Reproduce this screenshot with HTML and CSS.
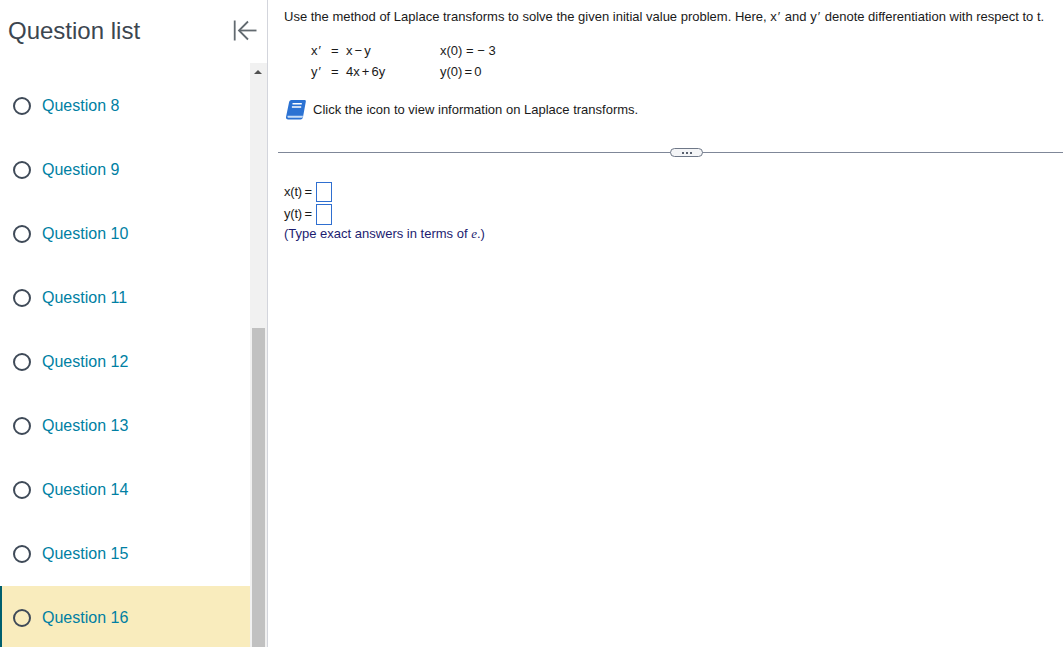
FILE: index.html
```html
<!DOCTYPE html>
<html lang="en">
<head>
<meta charset="utf-8">
<title>Question list</title>
<link rel="stylesheet" href="styles.css">
</head>
<body>
<div class="app">
  <aside class="sidebar">
    <header class="side-head">
      <h1 class="side-title">Question list</h1>
      <svg class="collapse" width="24" height="24" viewBox="0 0 24 24" fill="none" stroke="#626a70" stroke-width="1.8"><path d="M1.700 1.500v20"/><path d="M23.500 11.500H6"/><path d="M15 2.500 6 11.500l9 9"/></svg>
    </header>
    <div class="side-body">
      <ul class="qlist">
        <li class="qitem"><span class="radio"></span><span class="qlabel">Question 8</span></li>
        <li class="qitem"><span class="radio"></span><span class="qlabel">Question 9</span></li>
        <li class="qitem"><span class="radio"></span><span class="qlabel">Question 10</span></li>
        <li class="qitem"><span class="radio"></span><span class="qlabel">Question 11</span></li>
        <li class="qitem"><span class="radio"></span><span class="qlabel">Question 12</span></li>
        <li class="qitem"><span class="radio"></span><span class="qlabel">Question 13</span></li>
        <li class="qitem"><span class="radio"></span><span class="qlabel">Question 14</span></li>
        <li class="qitem"><span class="radio"></span><span class="qlabel">Question 15</span></li>
        <li class="qitem current"><span class="radio"></span><span class="qlabel">Question 16</span></li>
      </ul>
      <div class="scrollbar">
        <div class="scroll-up"></div>
        <div class="scroll-thumb"></div>
      </div>
    </div>
  </aside>
  <main class="content">
    <section class="problem">
      <p class="prompt">Use the method of Laplace transforms to solve the given initial value problem. Here, x<span class="prime">′</span> and y<span class="prime">′</span> denote differentiation with respect to t.</p>
      <div class="system">
        <div class="eqs">
          <div class="eq"><span class="lhs">x<span class="prime">′</span></span><span class="eqsign">=</span><span class="tight">x − y</span></div>
          <div class="eq"><span class="lhs">y<span class="prime">′</span></span><span class="eqsign">=</span><span class="tight">4x + 6y</span></div>
        </div>
        <div class="inits">
          <div class="eq">x(0) = − 3</div>
          <div class="eq"><span class="tight">y(0) = 0</span></div>
        </div>
      </div>
      <div class="info">
        <svg class="book" width="20" height="20" viewBox="0 0 20 20"><path d="M5.500 0h13c1 0 1.500.7 1.300 1.700L17 17c-.3 1.500-1 2.500-2.500 2.500H2C.7 19.500-.2 18.500 0 17L3 2.500C3.300 1 4 0 5.500 0z" fill="#2b72d3"/><path d="M1.800 15.800H17l-.5 2H2.300c-1 0-1-2-.5-2z" fill="#c5dcf7"/><path d="M6.500 3.800h9.300M5.900 7h9.300" stroke="#fff" stroke-width="1.400" fill="none"/></svg>
        <span>Click the icon to view information on Laplace transforms.</span>
      </div>
    </section>
    <div class="divider"><span class="divider-pill"><i></i><i></i><i></i></span></div>
    <section class="answers">
      <div class="answer"><span class="answer-label">x(t) =</span><span class="box"></span></div>
      <div class="answer"><span class="answer-label">y(t) =</span><span class="box box-tall"></span></div>
      <p class="hint">(Type exact answers in terms of <em class="e">e</em>.)</p>
    </section>
  </main>
</div>
</body>
</html>
```
FILE: styles.css
```css
* { box-sizing: border-box; }
html, body { margin: 0; height: 100%; overflow: hidden; background: #fff; }
body { font-family: "Liberation Sans", Arial, sans-serif; color: #1a1a1a; }
.app { display: flex; height: 647px; }
.sidebar { width: 268px; flex: none; display: flex; flex-direction: column; border-right: 1px solid #d3d5dc; }
.side-head { height: 63px; flex: none; display: flex; align-items: center; justify-content: space-between; padding: 0 10px 2px 8px; }
.side-title { margin: 0; font-size: 24px; font-weight: 400; color: #3c4650; }
.collapse { display: block; margin-top: 1px; }
.side-body { flex: 1; min-height: 0; display: flex; }
.qlist { flex: 1; list-style: none; margin: 0; padding: 11px 0 0; overflow: hidden; }
.qitem { height: 64px; display: flex; align-items: center; padding-left: 13px; gap: 11px; }
.qitem.current { background: #f9ecbd; border-left: 2px solid #005f6e; padding-left: 11px; height: 63px; }
.radio { width: 18px; height: 18px; border: 2px solid #3f4a58; border-radius: 50%; flex: none; }
.qlabel { font-size: 16px; color: #007fa3; }
.scrollbar { width: 17px; flex: none; background: #f1f1f1; display: flex; flex-direction: column; }
.scroll-up { margin-left: 4px; margin-top: 7px; width: 0; border-left: 4px solid transparent; border-right: 4px solid transparent; border-bottom: 4px solid #505050; height: 0; }
.scroll-thumb { margin: 254px 2px 0; flex: 1; background: #c1c1c1; }
.content { flex: 1; min-width: 0; padding-top: 9px; font-size: 13px; color: #1a1a1a; }
.problem { padding-left: 16px; }
.prompt { margin: 0; line-height: 15px; white-space: nowrap; }
.prime { margin: 0 1px 0 1px; }
.system { display: flex; margin: 16px 0 0 27px; }
.eqs { width: 129px; }
.eq { height: 21px; line-height: 21px; display: flex; white-space: pre; }
.tight { word-spacing: -1.5px; }
.lhs { width: 20px; }
.eqsign { width: 15px; }
.info { display: flex; align-items: center; gap: 7px; margin-top: 17px; height: 20px; }
.book { display: block; margin: 2px 0 0 2px; }
.divider { margin: 33px 0 0 10px; height: 1px; background: #7f8798; position: relative; }
.divider-pill { position: absolute; left: 392px; top: -4px; width: 33px; height: 9px; background: #f4f5f7; border: 1px solid #6f7888; border-radius: 5px; display: flex; align-items: center; justify-content: center; gap: 2px; }
.divider-pill i { width: 2px; height: 2px; background: #5a6270; }
.answers { padding: 28px 0 0 16px; }
.answer { height: 22px; display: flex; align-items: center; gap: 4px; }
.answer-label { padding-bottom: 2px; word-spacing: -1px; letter-spacing: -0.2px; }
.box { width: 16px; height: 20px; border: 1px solid #2f6fd0; display: block; }
.box-tall { height: 21px; }
.hint { margin: 1px 0 0; line-height: 16px; color: #1c1c70; }
.e { font-family: "Liberation Serif", serif; }
```
